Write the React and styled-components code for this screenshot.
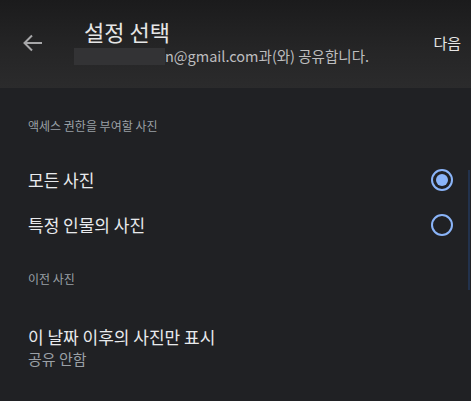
import React, { useState } from 'react';
import styled, { createGlobalStyle } from 'styled-components';

const GlobalStyle = createGlobalStyle`
  html, body {
    margin: 0;
    padding: 0;
    background: #202124;
  }
  body {
    font-family: "Noto Sans CJK KR", "Noto Sans", sans-serif;
    overflow: hidden;
  }
`;

const Screen = styled.div`
  width: 471px;
  height: 401px;
  background: #202124;
  position: relative;
`;

const Header = styled.header`
  height: 88px;
  box-sizing: border-box;
  background: linear-gradient(180deg, #1b1b1c 0%, #252526 55%, #2b2b2c 100%);
  display: flex;
  align-items: flex-start;
  padding: 17px 10px 0 22px;
`;

const BackButton = styled.button`
  border: 0;
  background: transparent;
  padding: 0;
  margin-top: 16px;
  width: 22px;
  height: 20px;
  display: flex;
  color: #a7a7a9;
`;

const TitleBlock = styled.div`
  flex: 1;
  display: flex;
  flex-direction: column;
  margin-left: 30px;
`;

const Title = styled.h1`
  margin: 0 0 0 10px;
  font-size: 22px;
  font-weight: 400;
  line-height: 28px;
  color: #e6e6e6;
`;

const Subtitle = styled.p`
  margin: 0;
  display: flex;
  align-items: center;
  font-size: 14.5px;
  line-height: 22px;
  color: #bdbdbf;
`;

const Redacted = styled.span`
  display: inline-block;
  width: 91px;
  height: 17px;
  background: #333335;
`;

const NextButton = styled.button`
  border: 0;
  background: transparent;
  padding: 0;
  margin-top: 15px;
  font-family: inherit;
  font-size: 15px;
  color: #e6e6e6;
`;

const Body = styled.main`
  padding: 0 18px 0 28px;
`;

const SectionLabel = styled.div`
  font-size: 12px;
  line-height: 18px;
  color: #9aa0a6;
  padding-top: ${p => p.$top}px;
  margin-bottom: ${p => p.$bottom}px;
`;

const OptionRow = styled.label`
  display: flex;
  align-items: center;
  justify-content: space-between;
  height: 45px;
  font-size: 17px;
  color: #e8eaed;
  cursor: pointer;
`;

const Radio = styled.span`
  width: 18px;
  height: 18px;
  border: 2px solid #8ab4f8;
  border-radius: 50%;
  display: flex;
  align-items: center;
  justify-content: center;

  &::after {
    content: '';
    width: 12px;
    height: 12px;
    border-radius: 50%;
    background: ${p => (p.$checked ? '#8ab4f8' : 'transparent')};
  }
`;

const DateItem = styled.div`
  display: flex;
  flex-direction: column;
`;

const DateTitle = styled.div`
  font-size: 17px;
  line-height: 24px;
  color: #e8eaed;
`;

const DateValue = styled.div`
  font-size: 15px;
  line-height: 20px;
  color: #9aa0a6;
`;

const Scrollbar = styled.div`
  position: absolute;
  right: 1px;
  top: 170px;
  width: 2px;
  height: 120px;
  background: #22324d;
`;

const options = ['모든 사진', '특정 인물의 사진'];

const App = () => {
  const [selected, setSelected] = useState(0);

  return (
    <Screen>
      <GlobalStyle />
      <Header>
        <BackButton aria-label='뒤로'>
          <svg width='22' height='20' viewBox='0 0 22 20' fill='none'>
            <path d='M20 10H3M10 2.5L2.5 10L10 17.5' stroke='currentColor' strokeWidth='2' />
          </svg>
        </BackButton>
        <TitleBlock>
          <Title>설정 선택</Title>
          <Subtitle>
            <Redacted />
            n@gmail.com과(와) 공유합니다.
          </Subtitle>
        </TitleBlock>
        <NextButton>다음</NextButton>
      </Header>
      <Body>
        <SectionLabel $top={29} $bottom={22}>액세스 권한을 부여할 사진</SectionLabel>
        {options.map((o, i) => (
          <OptionRow key={o} onClick={() => setSelected(i)}>
            {o}
            <Radio $checked={selected === i} />
          </OptionRow>
        ))}
        <SectionLabel $top={23} $bottom={37}>이전 사진</SectionLabel>
        <DateItem>
          <DateTitle>이 날짜 이후의 사진만 표시</DateTitle>
          <DateValue>공유 안함</DateValue>
        </DateItem>
      </Body>
      <Scrollbar />
    </Screen>
  );
};

export default App;
